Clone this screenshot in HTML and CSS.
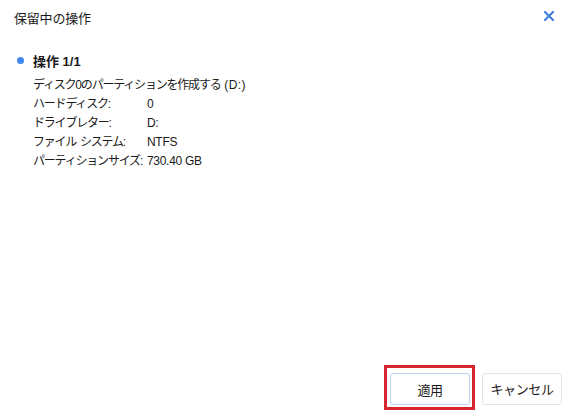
FILE: index.html
```html
<!DOCTYPE html>
<html lang="ja">
<head>
<meta charset="utf-8">
<title>保留中の操作</title>
<link rel="stylesheet" href="styles.css">
</head>
<body>
<div class="dialog">
  <div class="header">
    <span class="title">保留中の操作</span>
    <button class="close" aria-label="閉じる">
      <svg width="10" height="10" viewBox="0 0 10 10"><path d="M1 1 L9 9 M9 1 L1 9" stroke="#3b7ddd" stroke-width="2" stroke-linecap="square" fill="none"/></svg>
    </button>
  </div>
  <div class="content">
    <div class="op-head"><span class="dot"></span><span class="op-title">操作 1/1</span></div>
    <div class="details">
      <div class="desc">ディスク0のパーティションを作成する<span class="latin"> (D:)</span></div>
      <div class="row"><span class="label">ハードディスク:</span><span class="value">0</span></div>
      <div class="row"><span class="label">ドライブレター:</span><span class="value">D:</span></div>
      <div class="row"><span class="label">ファイル<span class="latin"> </span>システム:</span><span class="value">NTFS</span></div>
      <div class="row"><span class="label">パーティションサイズ:</span><span class="value">730.40 GB</span></div>
    </div>
  </div>
  <div class="footer">
    <div class="highlight"><button class="btn btn-apply">適用</button></div>
    <button class="btn btn-cancel">キャンセル</button>
  </div>
</div>
</body>
</html>
```
FILE: styles.css
```css
* { box-sizing: border-box; }
html, body {
  margin: 0;
  padding: 0;
  background: #ffffff;
}
body {
  font-family: "Liberation Sans", "Noto Sans CJK JP", sans-serif;
  color: #1a1a1a;
}
.dialog {
  width: 576px;
  height: 420px;
  display: flex;
  flex-direction: column;
}
.header {
  height: 34px;
  display: flex;
  align-items: center;
  justify-content: space-between;
  padding: 0 22px 0 14px;
}
.title {
  font-size: 13px;
  letter-spacing: -0.2px;
}
.close {
  border: none;
  background: none;
  padding: 0;
  width: 10px;
  height: 10px;
  display: flex;
  margin-top: -2px;
}
.content {
  flex: 1;
  padding-top: 16px;
}
.op-head {
  display: flex;
  align-items: center;
  height: 20px;
  padding-left: 17px;
}
.dot {
  width: 7px;
  height: 7px;
  border-radius: 50%;
  background: #3f86ee;
  margin-right: 9px;
}
.op-title {
  font-size: 13px;
  font-weight: bold;
}
.details {
  margin-top: 6px;
  padding-left: 33px;
  font-size: 12px;
  line-height: 19px;
  white-space: nowrap;
}
.desc,
.label {
  letter-spacing: -1.2px;
}
.latin {
  letter-spacing: 0.4px;
}
.value {
  letter-spacing: -0.3px;
}
.row {
  display: grid;
  grid-template-columns: 114px auto;
}
.footer {
  display: flex;
  justify-content: flex-end;
  align-items: center;
  padding: 0 14px 10px 0;
}
.highlight {
  border: 3px solid #d7262f;
  padding: 5px 2px 2px 3px;
  margin-right: 7px;
}
.btn {
  display: block;
  width: 80px;
  height: 32px;
  background: #ffffff;
  border-radius: 3px;
  font-family: "Liberation Sans", "Noto Sans CJK JP", sans-serif;
  font-size: 13px;
  color: #1a1a1a;
  padding: 0;
  letter-spacing: -0.4px;
}
.btn-apply {
  border: 1.5px solid #b9d2f3;
}
.btn-cancel {
  border: 1px solid #e2e2e2;
  margin-top: 2px;
}
```
